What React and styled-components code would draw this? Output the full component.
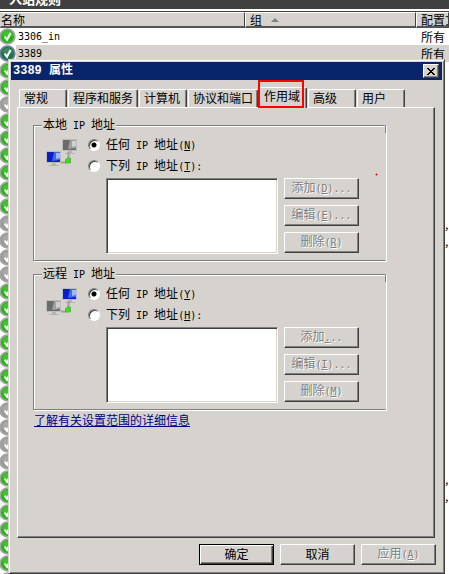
import React, { useState } from 'react';
import styled, { createGlobalStyle } from 'styled-components';

const GlobalStyle = createGlobalStyle`
  * {
    box-sizing: border-box;
  }
  body {
    margin: 0;
    background: #fff;
    color: #000;
    font: 12px/16px 'Noto Sans CJK SC', sans-serif;
  }
  button, input, select {
    font: inherit;
    color: inherit;
  }
`;

const Page = styled.div`
  position: relative;
  overflow: hidden;
`;

const Snapin = styled.div`
  height: 100vh;
  min-height: 574px;
  overflow: hidden;
`;

const SnapinTitle = styled.h1`
  display: flex;
  align-items: flex-end;
  height: 9px;
  margin: 0;
  padding: 0 0 4px 9px;
  overflow: hidden;
  background: #404040;
  color: #fff;
  font-size: 13px;
  line-height: 12px;
`;

const RuleTable = styled.table`
  width: 100%;
  margin-top: 2px;
  border-collapse: separate;
  border-spacing: 0;
  border-top: 1px solid #404040;
  table-layout: fixed;
`;

const HeadCell = styled.th`
  width: ${({ $width }) => $width || 'auto'};
  height: 16px;
  padding: 0 0 0 ${({ $first }) => ($first ? '0' : '4px')};
  background: #d6d3ce;
  border: solid;
  border-width: 1px 1px 2px;
  border-color: #fff #404040 #555 ${({ $first }) => ($first ? '#d6d3ce' : '#fff')};
  font-weight: normal;
  line-height: 13px;
  text-align: left;
  white-space: nowrap;
  overflow: hidden;
`;

const SortMark = styled.span`
  display: inline-block;
  margin-left: 9px;
  border: 4px solid transparent;
  border-top: 0;
  border-bottom-color: #808080;
  vertical-align: 3px;
`;

const RuleRow = styled.tr`
  background: ${({ $selected }) => ($selected ? '#d6d3ce' : '#fff')};
`;

const RuleCell = styled.td`
  height: 17px;
  padding: 0 0 0 ${({ $tail }) => ($tail ? '29px' : '5px')};
  line-height: 17px;
  white-space: nowrap;
  overflow: hidden;
`;

const RuleName = styled.td`
  height: 17px;
  padding: 0;
  background: ${({ $selected }) => ($selected ? 'linear-gradient(90deg, #fff 16px, #d6d3ce 16px)' : '#fff')};
`;

const NameBox = styled.div`
  display: flex;
  align-items: center;
  gap: 2px;
  height: 17px;
`;

const Dialog = styled.section`
  position: absolute;
  top: 59px;
  left: 8px;
  right: 4px;
  background: #d6d3ce;
  border: 1px solid;
  border-color: #d6d3ce #404040 #404040 #d6d3ce;
  box-shadow: inset 1px 1px 0 #fff, inset -1px -1px 0 #808080;
  padding: 2px;
`;

const TitleBar = styled.header`
  display: flex;
  align-items: center;
  justify-content: space-between;
  height: 18px;
  padding: 0 3px 0 2px;
  background: #08246b;
  color: #fff;
`;

const Title = styled.h2`
  margin: 0;
  font: bold 12px/18px 'Liberation Mono', 'Noto Sans CJK SC', monospace;
`;

const CloseButton = styled.button`
  display: flex;
  align-items: center;
  justify-content: center;
  width: 16px;
  height: 14px;
  padding: 0;
  background: #d6d3ce;
  border: 1px solid;
  border-color: #fff #404040 #404040 #fff;
  box-shadow: inset -1px -1px 0 #808080;
`;

const Content = styled.div`
  padding: 7px 7px 6px 6px;
`;

const TabList = styled.div`
  position: relative;
  display: flex;
  align-items: flex-end;
  gap: 1px;
  height: 20px;
  padding-left: 2px;
`;

const Tab = styled.button`
  position: relative;
  flex: none;
  min-width: 48px;
  height: ${({ $active }) => ($active ? '21px' : '18px')};
  margin-bottom: ${({ $active }) => ($active ? '-1px' : '0')};
  padding: 0 4px ${({ $active }) => ($active ? '4px' : '1px')};
  z-index: ${({ $active }) => ($active ? 1 : 0)};
  background: #d6d3ce;
  border: solid;
  border-width: 1px 1px 0;
  border-color: #fff #404040 #fff #fff;
  border-radius: 2px 2px 0 0;
  box-shadow: inset -1px 0 0 #808080;
  line-height: 16px;
  text-align: left;
  white-space: nowrap;
`;

const Highlight = styled.span`
  position: absolute;
  top: -8px;
  left: -2px;
  width: 46px;
  height: 28px;
  border: 2px solid #f00;
  pointer-events: none;
`;

const Panel = styled.div`
  position: relative;
  min-height: 431px;
  padding: 8px 48px 12px 15px;
  border: 1px solid;
  border-color: #fff #404040 #404040 #fff;
  box-shadow: inset -1px -1px 0 #808080;
`;

const RedDot = styled.svg`
  position: absolute;
  top: 65px;
  right: 56px;
`;

const Group = styled.fieldset`
  min-width: 0;
  margin: 0 0 4px;
  padding: 0 26px 6px 12px;
  border: 1px solid #808080;
  border-right-color: transparent;
  background: linear-gradient(#808080, #808080) no-repeat right top / 1px 8px border-box;
  box-shadow: 1px 1px 0 #fff, inset 1px 1px 0 #fff;
`;

const GroupTitle = styled.legend`
  margin-left: -4px;
  padding: 0 1px;
  background: #d6d3ce;
  line-height: 16px;
`;

const GroupBody = styled.div`
  display: flex;
  gap: 10px;
`;

const IconBox = styled.div`
  flex: none;
  width: 32px;
  padding-top: 5px;
`;

const Scope = styled.div`
  flex: 1;
  min-width: 0;
`;

const RadioRow = styled.label`
  display: flex;
  align-items: center;
  gap: 6px;
  height: 21px;
  white-space: nowrap;
`;

const Radio = styled.input`
  appearance: none;
  width: 12px;
  height: 12px;
  margin: 0;
  border: 1px solid;
  border-color: #808080 #fff #fff #808080;
  border-radius: 50%;
  background: #fff;
  box-shadow: inset 1px 1px 0 #404040;
  &:checked {
    background: radial-gradient(circle, #000 2px, #fff 3px);
  }
`;

const ListRow = styled.div`
  display: flex;
  gap: 6px;
  padding: 2px 0 0 18px;
`;

const ListBox = styled.select`
  appearance: none;
  flex: 1;
  min-width: 0;
  height: 76px;
  padding: 0;
  background: #fff;
  border: 1px solid;
  border-color: #808080 #fff #fff #808080;
  border-radius: 0;
  box-shadow: inset 1px 1px 0 #404040, inset -1px -1px 0 #d6d3ce;
  outline: none;
`;

const ButtonColumn = styled.div`
  display: flex;
  flex-direction: column;
  gap: 6px;
`;

const Button = styled.button`
  width: 75px;
  height: 21px;
  padding: 0 0 1px;
  background: #d6d3ce;
  border: 1px solid;
  border-color: ${({ $primary }) => ($primary ? '#000' : '#fff #404040 #404040 #fff')};
  box-shadow: ${({ $primary }) =>
    $primary
      ? 'inset 1px 1px 0 #fff, inset -1px -1px 0 #404040, inset -2px -2px 0 #808080'
      : 'inset -1px -1px 0 #808080'};
  line-height: 16px;
  white-space: nowrap;
  &:disabled {
    color: #808080;
    text-shadow: 1px 1px 0 #fff;
  }
`;

const Latin = styled.span`
  font-family: 'DejaVu Sans Mono', monospace;
  font-size: 10px;
  white-space: pre;
`;

const HelpLink = styled.a`
  display: block;
  width: fit-content;
  margin: -2px 0 0 1px;
  color: #000084;
  text-decoration: underline;
`;

const Footer = styled.footer`
  display: flex;
  justify-content: flex-end;
  gap: 6px;
  padding: 0 6px 6px;
`;

const tabs = ['常规', '程序和服务', '计算机', '协议和端口', '作用域', '高级', '用户'];

const disabledRules = [4, 11, 12, 13, 14, 22, 23, 24, 25, 32];
const multiProfileRules = [11, 12, 26, 27];

const rules = Array.from({ length: 33 }, (_, i) => ({
  id: i,
  name: ['3306_in', '3389'][i] || '',
  enabled: !disabledRules.includes(i),
  profile: i < 2 ? '所有' : multiProfileRules.includes(i) ? ',' : '',
}));

const StatusIcon = ({ enabled, selected }) => {
  const fill = enabled ? (selected ? '#1c7444' : '#20b80c') : '#9a9a9a';
  return (
    <svg width="16" height="17" viewBox="0 0 16 17" aria-hidden="true">
      <circle cx="7.5" cy="8.5" r="7.3" fill={fill} stroke={selected ? '#6d7f9c' : '#a4a4a4'} strokeWidth="1.8" />
      <path d="M2.500 8a5 5 0 0 1 10 0q-5 2-10 0z" fill="#fff" opacity="0.15" />
      <path d="M4.600 8.600l2.400 3.200 3.600-6.800" fill="none" stroke="#fff" strokeWidth="2" />
    </svg>
  );
};

const Screen = ({ x, y, active }) => (
  <g transform={`translate(${x} ${y})`}>
    <path d="M6 12h4v2h3v1H3v-1h3z" fill="#b4b4b4" />
    <rect width="15" height="12" fill="#bdbdbd" />
    <rect x="1" y="1" width="13" height="10" fill={active ? '#0a1fc8' : '#6c6c6c'} />
    <path d="M8 1h6v8l-8 1z" fill={active ? '#4468e0' : '#a0a0a0'} />
    <path d="M10 2h4v5l-4 1z" fill={active ? '#a0b8ff' : '#d0d0d0'} />
  </g>
);

const NetworkIcon = ({ remote }) => (
  <svg width="32" height="28" viewBox="0 0 32 28" aria-hidden="true">
    <Screen x={16} y={0} active={remote} />
    <path d="M15 23.500h6M22.500 20v-7" fill="none" stroke="#a0a0a0" strokeWidth="2" />
    <Screen x={0} y={12} active={!remote} />
    <path d="M19.500 20.500l2-1.500h3v5h-5z" fill="#3ce010" stroke="#4fae3c" strokeWidth="0.800" />
  </svg>
);

const Key = ({ k }) => (
  <Latin>
    (<u>{k}</u>)
  </Latin>
);

const ScopeGroup = ({ title, name, remote, keys }) => {
  const [mode, setMode] = useState('any');
  return (
    <Group>
      <GroupTitle>
        {title}
        <Latin> IP </Latin>地址
      </GroupTitle>
      <GroupBody>
        <IconBox>
          <NetworkIcon remote={remote} />
        </IconBox>
        <Scope>
          <RadioRow>
            <Radio type="radio" name={name} checked={mode === 'any'} onChange={() => setMode('any')} />
            <span>任何<Latin> IP </Latin>地址<Key k={keys.any} /></span>
          </RadioRow>
          <RadioRow>
            <Radio type="radio" name={name} checked={mode === 'list'} onChange={() => setMode('list')} />
            <span>下列<Latin> IP </Latin>地址<Key k={keys.list} /><Latin>:</Latin></span>
          </RadioRow>
          <ListRow>
            <ListBox size={4} aria-label={`${title} IP 地址`} />
            <ButtonColumn>
              <Button disabled>
                添加
                {keys.add ? <><Key k={keys.add} /><Latin>...</Latin></> : <Latin><u>.</u>..</Latin>}
              </Button>
              <Button disabled>编辑<Key k={keys.edit} /><Latin>...</Latin></Button>
              <Button disabled>删除<Key k={keys.remove} /></Button>
            </ButtonColumn>
          </ListRow>
        </Scope>
      </GroupBody>
    </Group>
  );
};

const App = () => {
  const [activeTab, setActiveTab] = useState('作用域');

  return (
    <Page>
      <GlobalStyle />
      <Snapin>
        <SnapinTitle>入站规则</SnapinTitle>
        <RuleTable>
          <thead>
            <tr>
              <HeadCell $first>名称</HeadCell>
              <HeadCell $width="171px">组<SortMark /></HeadCell>
              <HeadCell $width="33px">配置文件</HeadCell>
            </tr>
          </thead>
          <tbody>
            {rules.map((rule) => (
              <RuleRow key={rule.id} $selected={rule.id === 1}>
                <RuleName $selected={rule.id === 1}>
                  <NameBox>
                    <StatusIcon enabled={rule.enabled} selected={rule.id === 1} />
                    <Latin>{rule.name}</Latin>
                  </NameBox>
                </RuleName>
                <RuleCell />
                <RuleCell $tail={rule.profile === ','}>{rule.profile}</RuleCell>
              </RuleRow>
            ))}
          </tbody>
        </RuleTable>
      </Snapin>

      <Dialog role="dialog" aria-labelledby="dialog-title">
        <TitleBar>
          <Title id="dialog-title">3389 属性</Title>
          <CloseButton aria-label="关闭">
            <svg width="8" height="7" viewBox="0 0 8 7" shapeRendering="crispEdges">
              <path d="M0 0h2v1h1v1h2V1h1V0h2v1H7v1H6v1H5v1h1v1h1v1h1v1H6V6H5V5H3v1H2v1H0V6h1V5h1V4h1V3H2V2H1V1H0z" />
            </svg>
          </CloseButton>
        </TitleBar>
        <Content>
          <TabList role="tablist">
            {tabs.map((tab) => (
              <Tab
                key={tab}
                role="tab"
                aria-selected={tab === activeTab}
                $active={tab === activeTab}
                onClick={() => setActiveTab(tab)}
              >
                {tab}
                {tab === '作用域' && <Highlight />}
              </Tab>
            ))}
          </TabList>
          <Panel role="tabpanel">
            <ScopeGroup
              title="本地"
              name="local"
              keys={{ any: 'N', list: 'T', add: 'D', edit: 'E', remove: 'R' }}
            />
            <ScopeGroup
              title="远程"
              name="remote"
              remote
              keys={{ any: 'Y', list: 'H', edit: 'I', remove: 'M' }}
            />
            <HelpLink href="#scope">了解有关设置范围的详细信息</HelpLink>
            <RedDot width="3" height="3" viewBox="0 0 3 3" aria-hidden="true">
              <path d="M1 0h1v3H1zM0 1h3v1H0z" fill="#e66" />
              <path d="M1 1h1v1H1z" fill="#f00" />
            </RedDot>
          </Panel>
        </Content>
        <Footer>
          <Button $primary>确定</Button>
          <Button>取消</Button>
          <Button disabled>应用<Key k="A" /></Button>
        </Footer>
      </Dialog>
    </Page>
  );
};

export default App;
